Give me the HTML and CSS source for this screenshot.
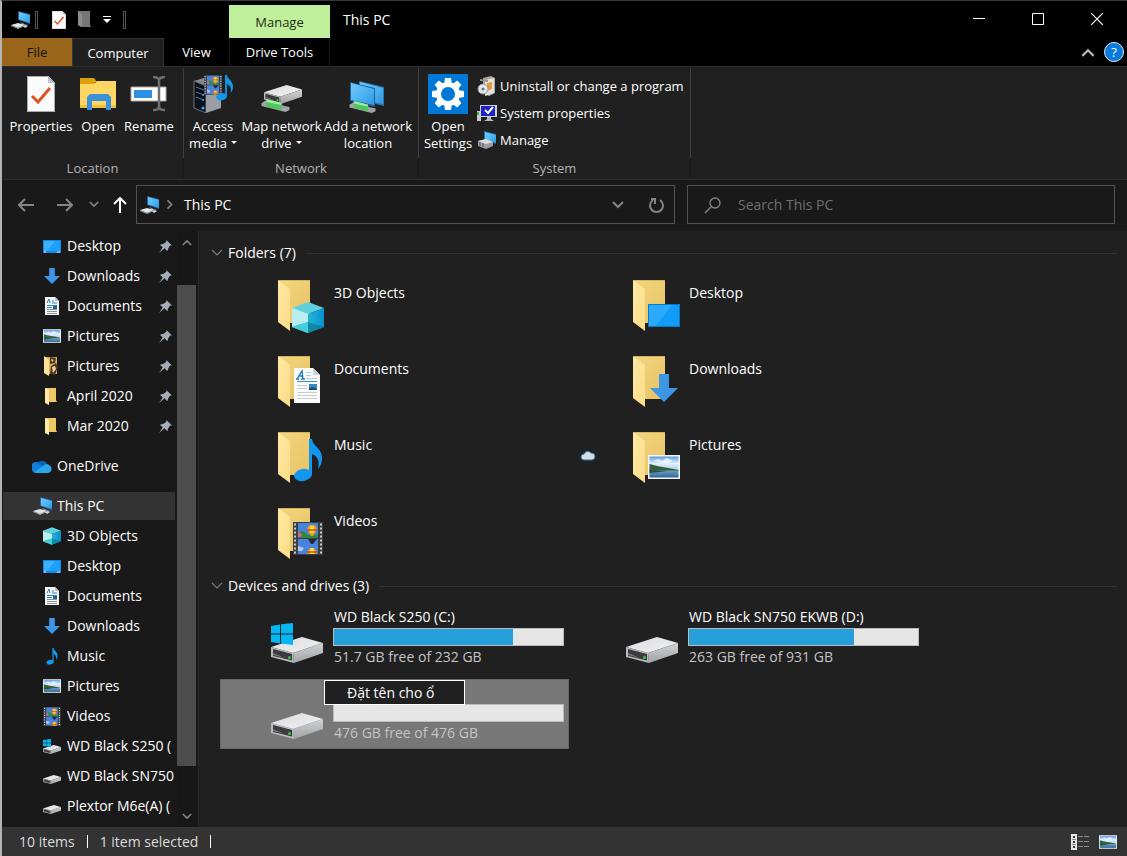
FILE: index.html
```html
<!DOCTYPE html>
<html lang="en">
<head>
<meta charset="utf-8">
<title>This PC</title>
<link rel="stylesheet" href="styles.css">
</head>
<body>
<svg class="sprite" width="0" height="0" aria-hidden="true">
  <defs>
    <linearGradient id="g-back" x1="0" y1="0" x2="1" y2="1"><stop offset="0" stop-color="#f3d681"/><stop offset="1" stop-color="#e8c264"/></linearGradient>
    <linearGradient id="g-flap" x1="0" y1="0" x2="1" y2="1"><stop offset="0" stop-color="#ffe9a6"/><stop offset="1" stop-color="#fbdc86"/></linearGradient>
    <linearGradient id="g-sky" x1="0" y1="0" x2="0" y2="1"><stop offset="0" stop-color="#5c9be4"/><stop offset="0.5" stop-color="#e4f0fa"/><stop offset="1" stop-color="#a9cdea"/></linearGradient>
    <linearGradient id="g-sea" x1="0" y1="0" x2="0" y2="1"><stop offset="0" stop-color="#6f9fc0"/><stop offset="1" stop-color="#2e6796"/></linearGradient>
    <linearGradient id="g-screen" x1="0" y1="0" x2="1" y2="1"><stop offset="0" stop-color="#74c8f8"/><stop offset="0.5" stop-color="#4fb6f5"/><stop offset="1" stop-color="#2f96e0"/></linearGradient>
    <linearGradient id="g-top" x1="0" y1="0" x2="1" y2="1"><stop offset="0" stop-color="#dcdddf"/><stop offset="1" stop-color="#f0f0f2"/></linearGradient>
    <linearGradient id="g-side" x1="0" y1="0" x2="0" y2="1"><stop offset="0" stop-color="#d0d1d3"/><stop offset="1" stop-color="#a2a3a6"/></linearGradient>
    <linearGradient id="g-cube" x1="0" y1="0" x2="1" y2="0"><stop offset="0" stop-color="#24b6d6"/><stop offset="1" stop-color="#0a8fd0"/></linearGradient>
  </defs>
  <symbol id="folder" viewBox="0 0 32 52"><path d="M0 0h32v43H10L0 40z" fill="url(#g-back)"/><path d="M0 0l12 9v42L0 42z" fill="url(#g-flap)"/><path d="M0 0h32" stroke="#b99a4c"/></symbol>
  <symbol id="cube" viewBox="0 0 32 31"><path d="M16 0l16 6-16 6L0 6z" fill="#5fd0de"/><path d="M0 6l16 6v19L0 25z" fill="#b8eef2"/><path d="M32 6l-16 6v19l16-6z" fill="url(#g-cube)"/><path d="M0 25l16-5 16 5-16 6z" fill="#0d7c95" opacity=".75"/><path d="M0 25l16-5v11z" fill="#3fd0dc"/></symbol>
  <symbol id="doc" viewBox="0 0 26 35"><path d="M0 0h19l7 7v28H0z" fill="#fafafa"/><path d="M19 0v7h7z" fill="#cfd2d6"/><path d="M3 11l5-8 1 8M5 8h4M2 11h3M7 11h4" fill="none" stroke="#2477b8" stroke-width="1.3"/><path d="M12 4.500h5M12 7.500h5M12 10.500h11" stroke="#a9d0ea"/><path d="M3 13.500h20" stroke="#3f8fcb"/><path d="M3 17.500h10M3 20.500h10M3 24.500h20M3 27.500h20M3 30.500h20" stroke="#c8cdd2"/><path d="M15 16h8v6h-8z" fill="#3588c8"/><path d="M15 20l4-1 4 2v1h-8z" fill="#234e66"/></symbol>
  <symbol id="minidoc" viewBox="0 0 14 18"><path d="M0 0h10l4 4v14H0z" fill="#f6f6f6"/><path d="M10 0v4h4z" fill="#bfc3c8"/><path d="M2 6l2-4 1 4M7 4h2M7 6h5M2 8.500h10M2 10.500h5" fill="none" stroke="#2f83c4"/><path d="M2 12.500h10M2 14.500h10M2 16.500h10" stroke="#8d949b"/><path d="M8 9h4v3H8z" fill="#22638f"/></symbol>
  <symbol id="note" viewBox="0 0 28 43"><ellipse cx="9" cy="36" rx="9" ry="6" fill="#1296ee" transform="rotate(-10 9 36)"/><path d="M15 0h3c1 8 11 9 10 21-.5 4-2 7-4 9 2-9-1-13-6-15v21l-3 1z" fill="#1296ee"/></symbol>
  <symbol id="film" viewBox="0 0 30 33"><path d="M0 0h30v33H0z" fill="#3c3f42"/><path d="M2 1.500v31M28 1.500v31" stroke="#c9ccce" stroke-width="2" stroke-dasharray="2 2"/><path d="M5 1h20v15H5zM5 17h20v15H5z" fill="#4a83dc"/><path d="M5 11l5-2 5 4h10v3H5z" fill="#2f8a3a"/><path d="M5 10l4 2-1 3H5z" fill="#df5d9c"/><path d="M14 8c0-7 10-7 10 0l-4 6h-2z" fill="#ef9d20"/><path d="M17 4h4v7h-4z" fill="#f8d83c"/><path d="M15 17h9l-4 5h-2z" fill="#27263a"/><path d="M5 24l6 2-2 3H5z" fill="#b4c9f0"/><path d="M14 32c0-8 10-8 10 0z" fill="#ef9d20"/><path d="M17 26h4v6h-4z" fill="#f8d83c"/><path d="M14 8h10M14 30h10" stroke="#9f2520"/></symbol>
  <symbol id="desk" viewBox="0 0 32 23"><path d="M0 0h32v23H0z" fill="#109cf8"/><path d="M0 0h25L7 23H0z" fill="#2ba9fb"/><path d="M.5.5h31v22H.5z" fill="none" stroke="#0b78c6"/></symbol>
  <symbol id="minidesk" viewBox="0 0 18 13"><path d="M0 0h18v13H0z" fill="#1088e4"/><path d="M1 1h16v10H1z" fill="#1fa0fa"/><path d="M1 1h11L4 11H1z" fill="#3bb0ff"/><path d="M1 12h2M14 12h3" stroke="#d8efff"/></symbol>
  <symbol id="down" viewBox="0 0 28 28"><path d="M9 0h10v14h9L14 28 0 14h9z" fill="#3b96e6"/></symbol>
  <symbol id="pic" viewBox="0 0 32 24"><path d="M0 0h32v24H0z" fill="#f2f4f6"/><path d="M1.500 1.500h29v14h-29z" fill="url(#g-sky)"/><path d="M5 6l5-2 4 2 5-3 6 3-7 2z" fill="#fff" opacity=".7"/><path d="M1.500 9l8 2 5 1 6 1 10 2v1h-29z" fill="#35613f"/><path d="M1.500 15.500h29v7h-29z" fill="url(#g-sea)"/><path d="M1.500 15l18 1-18 2z" fill="#28533e"/></symbol>
  <symbol id="drive" viewBox="0 0 52 26"><path d="M0 10L31 0l21 6-30 10z" fill="url(#g-top)"/><path d="M22 16L52 6v10L23 26z" fill="url(#g-side)"/><path d="M0 10l22 6 1 10L0 20z" fill="#b9babd"/><path d="M2 12l19 5v6.500L2 19z" fill="#3b3b3d"/><path d="M2 16l12 5-12-3z" fill="#77787a"/><circle cx="18.500" cy="20.500" r="1.500" fill="#35c848"/></symbol>
  <symbol id="win" viewBox="0 0 22 22"><path d="M0 3l9-1.500V10.500H0zM10 1.300L22 0v10.500H10zM0 11.500h9v9L0 19zM10 11.500h12V22l-12-1.500z" fill="#06b6f2"/></symbol>
  <symbol id="pc" viewBox="0 0 20 18"><path d="M7 0l12 3v10L7 9z" fill="#1d659c"/><path d="M8 1l11 3v8L8 8.500z" fill="url(#g-screen)"/><path d="M9 11l5 2 4 0-6 1z" fill="#9aa1a8"/><path d="M0 14l7-2 7 2-7 3z" fill="#e3e5e8"/><path d="M0 14l7 3v1l-7-3zM7 17l7-3v1l-7 3z" fill="#9fa3a8"/><path d="M12 15l3-1 2 1-3 2z" fill="#d5d7da"/></symbol>
  <symbol id="onedrive" viewBox="0 0 20 14"><path d="M4 6a6 6 0 0 1 11-1l-6 5z" fill="#0a5fb8"/><path d="M0 9a4 4 0 0 1 6-5l8 5-10 5A4 4 0 0 1 0 9z" fill="#117fd8"/><path d="M2 13l9-6c2-2 4-3 6-1 4 2 3 8-1 8H4z" fill="#28a8ea"/></symbol>
  <symbol id="pin" viewBox="0 0 14 14"><path d="M8 0l6 6-2 0-2 3-1 3-3-3-6 5 4-6-3-3 4-1 3-2z" fill="#a3acb8"/></symbol>
  <symbol id="sheet" viewBox="0 0 28 36"><path d="M0 0h21l7 7v29H0z" fill="#fbfbfb"/><path d="M21 0v7h7z" fill="#c4c6c9"/><path d="M.5.5h20l7 7v28H.5z" fill="none" stroke="#a9abad"/><path d="M5 20l6 6 12-14" fill="none" stroke="#df5420" stroke-width="3"/></symbol>
  <symbol id="chev" viewBox="0 0 12 8"><path d="M1 1l5 5 5-5" fill="none" stroke="currentColor" stroke-width="2"/></symbol>
  <symbol id="thin" viewBox="0 0 12 8"><path d="M1 1l5 5 5-5" fill="none" stroke="currentColor" stroke-width="1.200"/></symbol>
  <symbol id="arrow" viewBox="0 0 16 14"><path d="M16 7H2M7 1L1 7l6 6" fill="none" stroke="currentColor" stroke-width="2"/></symbol>
  <symbol id="cable" viewBox="0 0 28 14"><path d="M0 5l5-3 18 6 5 1v3l-4 2L0 8z" fill="#9fa4a6"/><path d="M5 1l15 4v7L5 9z" fill="#4fc45f"/><path d="M5 1l15 4v2L5 4z" fill="#a0eca0"/></symbol>
</svg>

<div class="window">
  <header class="caption">
    <div class="quick">
      <svg width="20" height="18"><use href="#pc"/></svg>
      <span class="notch"></span>
      <button class="bare" aria-label="Properties"><svg width="14" height="18"><use href="#sheet"/></svg></button>
      <button class="bare" aria-label="New folder"><svg width="13" height="17" viewBox="0 0 13 17"><path d="M0 0h12v14l1 2H3L0 14z" fill="#777"/><path d="M0 0l4 3v13l-4-2z" fill="#8c8c8c"/></svg></button>
      <button class="bare" aria-label="Customize Quick Access Toolbar"><svg width="8" height="8" viewBox="0 0 8 8"><path d="M0 .5h8" stroke="#fff"/><path d="M0 3h8L4 7z" fill="#fff"/></svg></button>
      <span class="notch"></span>
    </div>
    <div class="context">Manage</div>
    <h1 class="title">This PC</h1>
    <div class="controls">
      <button class="bare" aria-label="Minimize"><svg width="12" height="12" viewBox="0 0 12 12"><path d="M0 5.500h12" stroke="#fff"/></svg></button>
      <button class="bare" aria-label="Maximize"><svg width="12" height="12" viewBox="0 0 12 12"><path d="M.5.5h11v11H.5z" fill="none" stroke="#fff"/></svg></button>
      <button class="bare" aria-label="Close"><svg width="12" height="12" viewBox="0 0 12 12"><path d="M0 0l12 12M12 0L0 12" stroke="#fff" stroke-width="1.200"/></svg></button>
    </div>
  </header>

  <nav class="tabs">
    <button class="tab tab-file">File</button>
    <button class="tab tab-active">Computer</button>
    <button class="tab tab-view">View</button>
    <button class="tab tab-tools">Drive Tools</button>
    <div class="tab-end">
      <button class="bare fold" aria-label="Minimize the Ribbon"><svg class="flip" width="14" height="9"><use href="#chev"/></svg></button>
      <button class="help" aria-label="Help">?</button>
    </div>
  </nav>

  <section class="ribbon">
    <div class="group group-location">
      <div class="tools">
        <button class="big w-props"><span class="pic"><svg width="28" height="36"><use href="#sheet"/></svg></span>Properties</button>
        <button class="big w-open"><span class="pic"><svg width="38" height="36" viewBox="0 0 38 36"><path d="M1 2h14l3 4h-2v6H1z" fill="#dca10c"/><path d="M1 8h14l3-3h19v27H1z" fill="#fdd663"/><path d="M1 29h36v3H1z" fill="#eec04a"/><path d="M8 34V21l3-3h18l3 3v13h-5v-9H13v9z" fill="#3b91d8"/></svg></span>Open</button>
        <button class="big w-rename"><span class="pic"><svg width="38" height="36" viewBox="0 0 38 36"><path d="M1 11h35v14H1z" fill="#fff" stroke="#a7a7a7"/><path d="M4 14h18v8H4z" fill="#2f91e2"/><path d="M23 1c4 0 6 1 6 4v26c0 2-2 3-6 3M35 1c-4 0-6 1-6 4v26c0 2 2 3 6 3" fill="none" stroke="#6f6f6f" stroke-width="2.500"/></svg></span>Rename</button>
      </div>
      <div class="group-name">Location</div>
    </div>
    <div class="group group-network">
      <div class="tools">
        <button class="big w-access"><span class="pic"><svg width="40" height="38" viewBox="0 0 40 38"><path d="M1 6l13-4 14 4-15 5z" fill="#85898e"/><path d="M1 6l12 5v27L1 33z" fill="#0c1118"/><path d="M1 6l12 5v27L1 33z" fill="none" stroke="#6e747b"/><path d="M13 11l15-5v27l-15 5z" fill="#9b9ea3"/><path d="M3 12l8 3M3 17l8 3M3 22l8 3" stroke="#4b78a5"/><circle cx="10" cy="20" r="1" fill="#36a8ff"/><circle cx="10" cy="25" r="1" fill="#36a8ff"/><circle cx="10" cy="33" r="1.500" fill="#36a8ff"/><use href="#film" x="11" y="0" width="18" height="20"/><use href="#note" x="23" y="0" width="17" height="26"/></svg></span>Access<span>media<i class="caret"></i></span></button>
        <button class="big w-map"><span class="pic"><svg width="42" height="38" viewBox="0 0 42 38"><use href="#drive" x="3" y="10" width="38" height="19"/><use href="#cable" x="0" y="23" width="29" height="14"/></svg></span>Map network<span>drive<i class="caret"></i></span></button>
        <button class="big w-add"><span class="pic"><svg width="40" height="38" viewBox="0 0 40 38"><path d="M11 6l25 6v19l-25-6z" fill="#2b78af"/><path d="M12 7l23 6v16l-23-5z" fill="url(#g-screen)"/><path d="M2 7l25 6v19L2 26z" fill="#1c6499"/><path d="M3 8l23 6v16L3 25z" fill="url(#g-screen)"/><use href="#cable" x="1" y="25" width="27" height="13"/></svg></span>Add a network<span>location</span></button>
      </div>
      <div class="group-name">Network</div>
    </div>
    <div class="group group-system">
      <div class="tools">
        <button class="big w-settings"><span class="pic"><svg width="40" height="40" viewBox="0 0 40 40"><path d="M0 0h40v40H0z" fill="#0078d7"/><g fill="#fff"><g id="teeth"><path d="M17 4h6l1 7h-8zM17 36h6l1-7h-8z"/><path d="M4 17v6l7 1v-8zM36 17v6l-7 1v-8z"/></g><use href="#teeth" transform="rotate(45 20 20)"/></g><circle cx="20" cy="20" r="9.500" fill="none" stroke="#fff" stroke-width="5"/></svg></span>Open<span>Settings</span></button>
        <div class="stack">
          <button class="small"><svg width="20" height="20" viewBox="0 0 20 20"><path d="M6 2l8-2 4 2v15l-6 3-6-3z" fill="#aaa69d"/><path d="M8 4l9-2v15l-9 3z" fill="#e8e3d8"/><path d="M10 7l5-1v7l-5 2z" fill="#e59a48"/><path d="M3 3l8 1v2L3 5z" fill="#99938a"/><circle cx="6" cy="13" r="5" fill="#e3e7ea" stroke="#8f959b"/><circle cx="6" cy="13" r="1.500" fill="#6d7276"/></svg>Uninstall or change a program</button>
          <button class="small"><svg width="20" height="20" viewBox="0 0 20 20"><path d="M0 8h4v10H0z" fill="#c9ccd0"/><path d="M0 9h2v3H0z" fill="#39b54a"/><path d="M3 2h17v12H3z" fill="#d0d2d8"/><path d="M4 3h14v10H4z" fill="#1c22c4"/><path d="M8 7l3 3 5-6" fill="none" stroke="#fff" stroke-width="2"/><path d="M10 14h4v2l3 2H7l3-2z" fill="#b6b9be"/></svg>System properties</button>
          <button class="small"><svg width="20" height="20" viewBox="0 0 20 20"><path d="M7 1l12 3v10L7 10z" fill="#1c6fae"/><path d="M8 2l11 3v8L8 9z" fill="url(#g-screen)"/><path d="M1 11l8-2 7 3v4l-7 3-8-3z" fill="#9a9ea3"/><path d="M1 11l8-2 7 3-7 2z" fill="#d9dbde"/><path d="M3 12v4M6 13v4" stroke="#5c6064"/></svg>Manage</button>
        </div>
      </div>
      <div class="group-name">System</div>
    </div>
  </section>

  <div class="address">
    <button class="bare" aria-label="Back"><svg width="16" height="14"><use href="#arrow"/></svg></button>
    <button class="bare" aria-label="Forward"><svg class="flip" width="16" height="14"><use href="#arrow"/></svg></button>
    <button class="bare" aria-label="Recent locations"><svg width="10" height="7"><use href="#chev"/></svg></button>
    <button class="bare nav-up" aria-label="Up"><svg class="turn" width="16" height="14"><use href="#arrow"/></svg></button>
    <div class="path">
      <svg width="20" height="18"><use href="#pc"/></svg>
      <svg class="turn-back" width="10" height="7"><use href="#chev"/></svg>
      <span class="path-name">This PC</span>
      <button class="bare" aria-label="Previous locations"><svg width="12" height="8"><use href="#chev"/></svg></button>
      <button class="bare" aria-label="Refresh"><svg width="16" height="16" viewBox="0 0 16 16"><path d="M4 3a6.500 6.500 0 1 0 7 0M2 2h4v5" fill="none" stroke="#858585" stroke-width="2"/></svg></button>
    </div>
    <label class="search"><svg width="18" height="18" viewBox="0 0 18 18"><path d="M7 11L1 17" stroke="#858585" stroke-width="1.500"/><circle cx="11" cy="7" r="5" fill="none" stroke="#858585" stroke-width="1.300"/></svg><input type="search" aria-label="Search This PC" placeholder="Search This PC"></label>
  </div>

  <div class="body">
    <aside class="side">
      <ul class="tree">
        <li><svg width="18" height="13"><use href="#minidesk"/></svg><span>Desktop</span><svg class="pin"><use href="#pin"/></svg></li>
        <li><svg width="18" height="16"><use href="#down"/></svg><span>Downloads</span><svg class="pin"><use href="#pin"/></svg></li>
        <li><svg width="18" height="18"><use href="#minidoc"/></svg><span>Documents</span><svg class="pin"><use href="#pin"/></svg></li>
        <li><svg width="18" height="14"><use href="#pic"/></svg><span>Pictures</span><svg class="pin"><use href="#pin"/></svg></li>
        <li><svg width="18" height="20" viewBox="0 0 18 20"><path d="M2 1h12v17H2z" fill="#dcb458"/><path d="M7 1l6 1-1 5-5 1zM8 10l5-3 2 4-3 8-5-1z" fill="#51371f"/><path d="M9 11l3-1 1 3-3 4zM8 3l3 1-2 2z" fill="#e7d3aa"/><path d="M1 0l5 4v16l-5-3z" fill="#ffe29a"/></svg><span>Pictures</span><svg class="pin"><use href="#pin"/></svg></li>
        <li><svg width="18" height="18" viewBox="0 0 18 18"><g id="mini"><path d="M2 1h11v12l1 2H2z" fill="#eec865"/><path d="M2 1l4 2v15l-4-2z" fill="#ffe9a6"/></g></svg><span>April 2020</span><svg class="pin"><use href="#pin"/></svg></li>
        <li><svg width="18" height="18" viewBox="0 0 18 18"><use href="#mini"/></svg><span>Mar 2020</span><svg class="pin"><use href="#pin"/></svg></li>
        <li class="root"><svg width="20" height="14"><use href="#onedrive"/></svg><span>OneDrive</span></li>
        <li class="root current"><svg width="20" height="18"><use href="#pc"/></svg><span>This PC</span></li>
        <li><svg width="18" height="18"><use href="#cube"/></svg><span>3D Objects</span></li>
        <li><svg width="18" height="13"><use href="#minidesk"/></svg><span>Desktop</span></li>
        <li><svg width="18" height="18"><use href="#minidoc"/></svg><span>Documents</span></li>
        <li><svg width="18" height="16"><use href="#down"/></svg><span>Downloads</span></li>
        <li><svg width="18" height="17"><use href="#note"/></svg><span>Music</span></li>
        <li><svg width="18" height="14"><use href="#pic"/></svg><span>Pictures</span></li>
        <li><svg width="18" height="19"><use href="#film"/></svg><span>Videos</span></li>
        <li><svg width="18" height="18" viewBox="0 0 18 18"><use href="#drive" x="0" y="7" width="18" height="11"/><use href="#win" x="0" y="2" width="8" height="8"/></svg><span>WD Black S250 (</span></li>
        <li><svg width="18" height="18" viewBox="0 0 18 18"><use href="#drive" x="0" y="7" width="18" height="11"/></svg><span>WD Black SN750</span></li>
        <li><svg width="18" height="18" viewBox="0 0 18 18"><use href="#drive" x="0" y="7" width="18" height="11"/></svg><span>Plextor M6e(A) (</span></li>
      </ul>
      <div class="scroll">
        <svg class="flip" width="10" height="7"><use href="#chev"/></svg>
        <div class="thumb"></div>
        <svg width="10" height="7"><use href="#chev"/></svg>
      </div>
    </aside>

    <main class="files">
      <h2 class="section"><svg width="12" height="8"><use href="#thin"/></svg>Folders (7)</h2>
      <ul class="tiles">
        <li class="tile"><svg class="art" viewBox="0 0 56 70"><use href="#folder" x="8" y="10" width="32" height="52"/><use href="#cube" x="22" y="32" width="32" height="31"/></svg><span class="name">3D Objects</span></li>
        <li class="tile"><svg class="art" viewBox="0 0 56 70"><use href="#folder" x="8" y="10" width="32" height="52"/><use href="#desk" x="23" y="34" width="32" height="23"/></svg><span class="name">Desktop</span></li>
        <li class="tile"><svg class="art" viewBox="0 0 56 70"><use href="#folder" x="8" y="10" width="32" height="52"/><use href="#doc" x="24" y="22" width="26" height="35"/></svg><span class="name">Documents</span></li>
        <li class="tile"><svg class="art" viewBox="0 0 56 70"><use href="#folder" x="8" y="10" width="32" height="52"/><use href="#down" x="25" y="28" width="28" height="28"/></svg><span class="name">Downloads</span></li>
        <li class="tile"><svg class="art" viewBox="0 0 56 70"><use href="#folder" x="8" y="10" width="32" height="52"/><use href="#note" x="24" y="17" width="28" height="43"/></svg><span class="name">Music</span></li>
        <li class="tile"><svg class="cloud" width="16" height="12" viewBox="0 0 16 12"><path d="M4 11a3 3 0 0 1 0-6 4 4 0 0 1 7-1 3 3 0 0 1 1 7z" fill="#d9dde1" stroke="#1b6fb5"/></svg><svg class="art" viewBox="0 0 56 70"><use href="#folder" x="8" y="10" width="32" height="52"/><use href="#pic" x="23" y="33" width="32" height="24"/></svg><span class="name">Pictures</span></li>
        <li class="tile"><svg class="art" viewBox="0 0 56 70"><use href="#folder" x="8" y="10" width="32" height="52"/><use href="#film" x="23" y="24" width="30" height="33"/></svg><span class="name">Videos</span></li>
      </ul>
      <h2 class="section section-drives"><svg width="12" height="8"><use href="#thin"/></svg>Devices and drives (3)</h2>
      <ul class="tiles">
        <li class="tile"><svg class="art" viewBox="0 0 56 70"><use href="#drive" x="1" y="34" width="52" height="26"/><use href="#win" x="1" y="20" width="22" height="22"/></svg>
          <div class="info"><span>WD Black S250 (C:)</span><div class="bar"><div class="used" style="width:78%"></div></div><span class="free">51.7 GB free of 232 GB</span></div></li>
        <li class="tile"><svg class="art" viewBox="0 0 56 70"><use href="#drive" x="1" y="34" width="52" height="26"/></svg>
          <div class="info"><span>WD Black SN750 EKWB (D:)</span><div class="bar"><div class="used" style="width:72%"></div></div><span class="free">263 GB free of 931 GB</span></div></li>
        <li class="tile selected"><svg class="art" viewBox="0 0 56 70"><use href="#drive" x="1" y="34" width="52" height="26"/></svg>
          <div class="info"><span>&nbsp;</span><div class="bar"></div><span class="free">476 GB free of 476 GB</span></div>
          <input class="rename" type="text" aria-label="Drive name" value="Đặt tên cho ổ"></li>
      </ul>
    </main>
  </div>

  <footer class="status">
    <span class="cell">10 items</span><span class="cell">1 item selected</span>
    <div class="views">
      <button class="bare" aria-label="Details view"><svg width="19" height="16" viewBox="0 0 19 16"><path d="M0 0h6v16H0z" fill="#e6e6e6"/><path d="M1 5.500h4M1 10.500h4" stroke="#888"/><path d="M2 2h2v2H2zM2 7h2v2H2zM2 12h2v2H2z" fill="#333"/><path d="M7 2.500h5M13 2.500h5M7 7.500h5M13 7.500h5M7 12.500h5M13 12.500h5" stroke="#8a8a8a"/></svg></button>
      <button class="bare" aria-label="Large icons view"><svg width="18" height="14"><use href="#pic"/></svg></button>
    </div>
  </footer>
</div>
</body>
</html>
```
FILE: styles.css
```css
* { box-sizing: border-box; }
body {
  margin: 0;
  background: #191919;
  color: #fff;
  font: 14px/20px "Open Sans", "Noto Sans", sans-serif;
}
ul { list-style: none; margin: 0; padding: 0; }
h1, h2 { margin: 0; font-size: 14px; font-weight: 400; }
svg { display: block; flex: none; }
button, input { font: inherit; color: inherit; }
button { border: 0; background: none; padding: 0; }
.sprite { position: absolute; }
.bare { display: flex; align-items: center; justify-content: center; }
.flip { transform: rotate(180deg); }
.turn { transform: rotate(90deg); }
.turn-back { transform: rotate(-90deg); }

.window {
  display: flex;
  flex-direction: column;
  min-height: 100vh;
  border-top: 1px solid #3a3a3a;
  border-left: 2px solid #b4b4b4;
}

/* Caption and tabs */
.caption { display: flex; height: 37px; background: #000; }
.quick { display: flex; align-items: center; width: 227px; padding-left: 9px; }
.quick .notch { width: 3px; height: 18px; border: 1px solid #555; margin: 0 14px 0 4px; }
.quick button { margin-right: 12px; }
.quick button + .notch { margin-left: 0; }
.context {
  width: 101px;
  margin-top: 4px;
  background: #bfef9a;
  color: #1d2b16;
  font-size: 13px;
  line-height: 34px;
  text-align: center;
}
.title { flex: 1; padding-left: 13px; line-height: 38px; }
.controls { display: flex; padding-right: 1px; }
.controls button { width: 59px; height: 36px; }
.tabs { display: flex; height: 28px; background: #000; font-size: 13px; }
.tab { height: 28px; }
.tab-file { width: 70px; background: #99651b; color: #15100a; }
.tab-active { width: 92px; background: #202020; border: 1px solid #333; border-bottom: 0; }
.tab-view { width: 65px; }
.tab-tools { width: 101px; border: solid #1c1c1c; border-width: 0 1px; }
.tab-end { display: flex; align-items: center; margin-left: auto; gap: 9px; padding-right: 3px; }
.fold { color: #b4b4b4; }
.help {
  width: 20px;
  height: 20px;
  border: 1px solid #d6ecff;
  border-radius: 50%;
  background: #0a7bdc;
  line-height: 18px;
}

/* Ribbon */
.ribbon {
  display: flex;
  min-height: 114px;
  padding-top: 1px;
  background: #202020;
  border: solid #2c2c2c;
  border-width: 1px 0;
  font-size: 13px;
}
.group { display: flex; flex-direction: column; }
.group-location { width: 182px; }
.group-network { width: 235px; }
.group-system { width: 272px; }
.tools { display: flex; height: 90px; border-right: 1px solid #3e3e3e; }
.group-name { border-right: 1px solid #181818; line-height: 20px; text-align: center; color: #b4b4b4; }
.big { display: flex; flex-direction: column; align-items: center; padding-top: 6px; line-height: 17px; white-space: nowrap; }
.big .pic { display: flex; align-items: center; justify-content: center; height: 40px; margin-bottom: 4px; }
.w-props { width: 78px; }
.w-open { width: 36px; }
.w-rename { width: 66px; }
.w-access { width: 58px; }
.w-map { width: 79px; }
.w-add { width: 94px; }
.w-settings { width: 58px; }
.caret {
  display: inline-block;
  margin: 0 0 4px 4px;
  border: 3px solid transparent;
  border-top-color: #fff;
  border-bottom: 0;
}
.stack { display: flex; flex-direction: column; padding-top: 4px; }
.small { display: flex; align-items: center; gap: 3px; height: 27px; white-space: nowrap; }

/* Address row */
.address {
  display: grid;
  grid-template-columns: 39px 39px 20px 32px minmax(0, 539fr) 12px minmax(0, 428fr);
  height: 51px;
  padding: 5px 12px 7px 4px;
  background: #191919;
  color: #858585;
}
.nav-up { color: #fff; }
.path { display: flex; align-items: center; border: 1px solid #535353; padding-left: 3px; gap: 5px; }
.path button { width: 34px; height: 36px; }
.path-name { flex: 1; padding-left: 4px; color: #fff; }
.search { grid-column: 7; display: flex; align-items: center; gap: 16px; padding-left: 16px; border: 1px solid #535353; }
.search input { flex: 1; min-width: 0; border: 0; outline: 0; background: none; padding: 0; }
.search input::placeholder { color: #6f6f6f; opacity: 1; }

/* Navigation pane */
.body { flex: 1; display: flex; }
.side { display: flex; width: 197px; background: #191919; border-right: 1px solid #262626; }
.tree { width: 174px; padding-right: 1px; }
.tree li { display: flex; align-items: center; gap: 6px; height: 30px; padding-left: 41px; white-space: nowrap; }
.tree span { flex: 1; min-width: 0; overflow: hidden; }
.tree .pin { width: 13px; height: 13px; margin-right: 3px; }
.tree .root { margin-top: 10px; padding-left: 30px; gap: 5px; }
.tree .current { height: 28px; margin: 11px 0 1px 1px; padding-left: 30px; gap: 4px; background: #333; }
.scroll { display: flex; flex-direction: column; align-items: center; width: 19px; margin-left: 1px; padding: 8px 0 7px; color: #858585; background: #171717; }
.thumb { width: 19px; flex: 1; margin: 39px 0 47px; background: #4d4d4d; }

/* File list */
.files { flex: 1; padding: 12px 10px 12px 12px; background: #202020; }
.section { display: flex; align-items: center; gap: 5px; height: 20px; }
.section svg { color: #7a7a7a; }
.section::after { content: ""; flex: 1; height: 1px; margin-left: 5px; background: #303030; }
.section-drives { margin-top: 8px; }
.tiles { display: grid; grid-template-columns: repeat(auto-fill, 349px); gap: 6px; margin: 7px 0 0 9px; }
.tile { position: relative; display: grid; grid-template-columns: 50px 56px 1fr; height: 70px; }
.art { grid-column: 2; grid-row: 1; width: 56px; height: 70px; }
.cloud { grid-column: 1; grid-row: 1; margin: 27px 0 0 5px; }
.name { grid-column: 3; padding: 13px 0 0 8px; }
.info { grid-column: 3; grid-row: 1; display: flex; flex-direction: column; padding: 4px 5px 0 7px; }
.info span { padding-left: 1px; }
.bar { height: 18px; margin: 1px 0; border: 1px solid #bcbcbc; background: #e6e6e6; }
.used { height: 100%; background: #26a0da; }
.free { color: #c4c4c4; }
.selected { background: #777; outline: 1px solid #666; outline-offset: -1px; }
.rename {
  position: absolute;
  top: 1px;
  left: 104px;
  width: 141px;
  height: 25px;
  padding: 0 22px;
  border: 1px solid #fff;
  background: #202020;
}

/* Status bar */
.status { display: flex; align-items: center; height: 29px; padding: 0 10px 0 17px; background: #333; color: #dcdcdc; }
.cell { display: flex; align-items: center; }
.cell::after { content: ""; width: 1px; height: 13px; margin: 0 12px; background: #fff; }
.views { display: flex; gap: 9px; margin-left: auto; }
```
